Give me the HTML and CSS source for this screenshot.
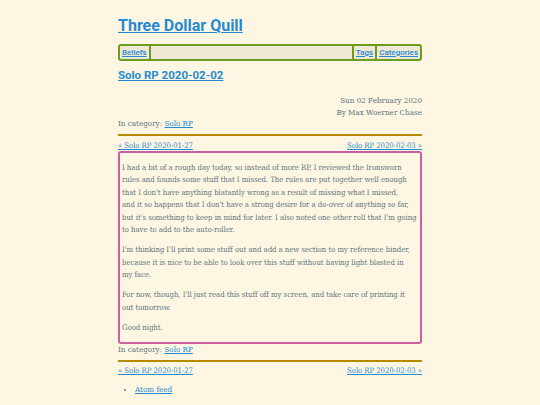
FILE: index.html
```html
<!DOCTYPE html>
<html>
<head>
<meta charset="utf-8">
<link rel="stylesheet" href="styles.css">
</head>
<body>
<div class="page">
  <header class="site-header">
    <h1 class="site-title"><a href="#">Three Dollar Quill</a></h1>
    <nav class="site-nav">
      <a class="nav-item nav-left" href="#">Beliefs</a>
      <span class="nav-fill"></span>
      <a class="nav-item nav-right" href="#">Tags</a>
      <a class="nav-item nav-right" href="#">Categories</a>
    </nav>
  </header>
  <main>
    <h2 class="post-title"><a href="#">Solo RP 2020-02-02</a></h2>
    <div class="meta meta-top">
      <div class="meta-right">Sun 02 February 2020</div>
      <div class="meta-right">By Max Woerner Chase</div>
      <div class="meta-left">In category: <a href="#">Solo RP</a></div>
    </div>
    <div class="rule"></div>
    <div class="pager">
      <a href="#">« Solo RP 2020-01-27</a>
      <a href="#">Solo RP 2020-02-03 »</a>
    </div>
    <article class="post">
      <p>I had a bit of a rough day today, so instead of more RP, I reviewed the Ironsworn<br>
      rules and founds some stuff that I missed. The rules are put together well enough<br>
      that I don't have anything blatantly wrong as a result of missing what I missed,<br>
      and it so happens that I don't have a strong desire for a do-over of anything so far,<br>
      but it's something to keep in mind for later. I also noted one other roll that I'm going<br>
      to have to add to the auto-roller.</p>
      <p>I'm thinking I'll print some stuff out and add a new section to my reference binder,<br>
      because it is nice to be able to look over this stuff without having light blasted in<br>
      my face.</p>
      <p>For now, though, I'll just read this stuff off my screen, and take care of printing it<br>
      out tomorrow.</p>
      <p>Good night.</p>
    </article>
    <div class="meta meta-bottom">
      <div class="meta-left">In category: <a href="#">Solo RP</a></div>
    </div>
    <div class="rule"></div>
    <div class="pager pager-bottom">
      <a href="#">« Solo RP 2020-01-27</a>
      <a href="#">Solo RP 2020-02-03 »</a>
    </div>
  </main>
  <footer>
    <ul class="feeds">
      <li><a href="#">Atom feed</a></li>
    </ul>
  </footer>
</div>
</body>
</html>
```

FILE: styles.css
```css
html, body {
  margin: 0;
  padding: 0;
  background: #fdf6e3;
}
body {
  color: #5f757d;
  font-family: "DejaVu Serif Condensed", "DejaVu Serif", serif;
  font-stretch: condensed;
  font-size: 8px;
}
a {
  color: #268bd2;
}
.page {
  width: 304px;
  margin: 0 auto;
  padding-top: 14px;
}
.site-title {
  font-family: Roboto, sans-serif;
  font-stretch: normal;
  font-weight: 700;
  font-size: 16px;
  line-height: 24px;
  margin: 0 0 6px 0;
}
.site-nav {
  display: flex;
  align-items: stretch;
  border: 2px solid #6a9c1f;
  border-radius: 3px;
  background: #eee8d5;
  height: 13px;
  font-family: Roboto, sans-serif;
  font-stretch: normal;
  font-size: 8px;
  font-weight: 500;
  line-height: 13px;
}
.nav-item {
  padding: 0 2px;
}
.nav-left {
  border-right: 2px solid #6a9c1f;
}
.nav-right {
  border-left: 2px solid #6a9c1f;
}
.nav-fill {
  flex: 1;
}
.post-title {
  font-family: Roboto, sans-serif;
  font-stretch: normal;
  font-weight: 700;
  font-size: 11.5px;
  line-height: 18px;
  margin: 5px 0 0 0;
}
.meta {
  line-height: 11.5px;
}
.meta-top {
  margin-top: 11px;
}
.meta-bottom {
  margin-top: 0;
}
.meta-right {
  text-align: right;
}
.rule {
  height: 2px;
  background: #b58900;
  margin: 4px 0 4px 0;
}
.pager {
  display: flex;
  justify-content: space-between;
  line-height: 11.5px;
  font-size: 7.6px;
}
.pager-bottom {
  margin-top: -1px;
}
.post {
  border: 2px solid #cc5f9e;
  border-radius: 3px;
  padding: 1px 2px;
  margin: 0;
  font-size: 7.7px;
  letter-spacing: -0.03px;
}
.post p {
  margin: 7.5px 0;
  line-height: 12.5px;
  white-space: nowrap;
}
.post p:last-child {
  margin-bottom: 7px;
}
.feeds {
  margin: 7px 0 0 0;
  padding-left: 17px;
  line-height: 14px;
}
```
